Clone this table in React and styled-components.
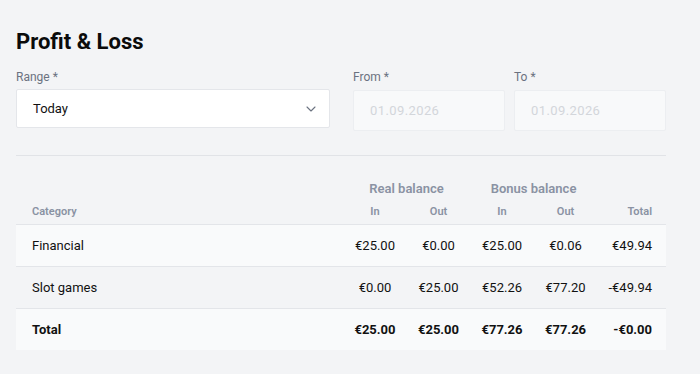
import React from "react";
import styled, { createGlobalStyle } from "styled-components";
import { ChevronDown } from "lucide-react";

const rows = [
  { name: "Financial", realIn: "€25.00", realOut: "€0.00", bonusIn: "€25.00", bonusOut: "€0.06", total: "€49.94" },
  { name: "Slot games", realIn: "€0.00", realOut: "€25.00", bonusIn: "€52.26", bonusOut: "€77.20", total: "-€49.94" },
];

const totals = { realIn: "€25.00", realOut: "€25.00", bonusIn: "€77.26", bonusOut: "€77.26", total: "-€0.00" };

const App = () => {
  return (
    <>
      <GlobalStyle />
      <Page>
        <Title>Profit &amp; Loss</Title>
        <Filters>
          <Field $width="314px">
            <Label>Range *</Label>
            <Select>
              <span>Today</span>
              <ChevronDown size={16} strokeWidth={1.6} color="#6b7280" />
            </Select>
          </Field>
          <Dates>
            <Field $width="152px">
              <Label>From *</Label>
              <DateInput>01.09.2026</DateInput>
            </Field>
            <Field $width="152px">
              <Label>To *</Label>
              <DateInput>01.09.2026</DateInput>
            </Field>
          </Dates>
        </Filters>
        <Divider />
        <Table>
          <colgroup>
            <col style={{ width: "327px" }} />
            <col style={{ width: "64px" }} />
            <col style={{ width: "63px" }} />
            <col style={{ width: "64px" }} />
            <col style={{ width: "63px" }} />
            <col style={{ width: "69px" }} />
          </colgroup>
          <thead>
            <GroupRow>
              <th />
              <GroupHead colSpan={2}>Real balance</GroupHead>
              <GroupHead colSpan={2}>Bonus balance</GroupHead>
              <th />
            </GroupRow>
            <HeadRow>
              <HeadCell $align="left">Category</HeadCell>
              <HeadCell>In</HeadCell>
              <HeadCell>Out</HeadCell>
              <HeadCell>In</HeadCell>
              <HeadCell>Out</HeadCell>
              <HeadCell $align="right">Total</HeadCell>
            </HeadRow>
          </thead>
          <tbody>
            {rows.map((r, i) => (
              <BodyRow key={r.name} $shade={i % 2 === 1}>
                <Cell $align="left">{r.name}</Cell>
                <Cell>{r.realIn}</Cell>
                <Cell>{r.realOut}</Cell>
                <Cell>{r.bonusIn}</Cell>
                <Cell>{r.bonusOut}</Cell>
                <Cell $align="right">{r.total}</Cell>
              </BodyRow>
            ))}
            <BodyRow $total>
              <Cell $align="left">Total</Cell>
              <Cell>{totals.realIn}</Cell>
              <Cell>{totals.realOut}</Cell>
              <Cell>{totals.bonusIn}</Cell>
              <Cell>{totals.bonusOut}</Cell>
              <Cell $align="right">{totals.total}</Cell>
            </BodyRow>
          </tbody>
        </Table>
      </Page>
    </>
  );
};

const GlobalStyle = createGlobalStyle`
  body {
    margin: 0;
    background: #f3f4f6;
    font-family: Roboto, "Liberation Sans", sans-serif;
    color: #111;
  }
`;

const Page = styled.div`
  width: 650px;
  padding: 28px 16px 24px;
`;

const Title = styled.h1`
  margin: 0;
  font-size: 22px;
  line-height: 28px;
  font-weight: 700;
  color: #0b0b0b;
`;

const Filters = styled.div`
  margin-top: 13px;
  display: flex;
  justify-content: space-between;
`;

const Dates = styled.div`
  display: flex;
  gap: 9px;
`;

const Field = styled.div`
  width: ${(p) => p.$width};
  display: flex;
  flex-direction: column;
`;

const Label = styled.label`
  font-size: 12px;
  line-height: 16px;
  color: #6b7280;
  margin-bottom: 4px;
`;

const Select = styled.div`
  box-sizing: border-box;
  height: 39px;
  display: flex;
  align-items: center;
  justify-content: space-between;
  padding: 0 10px 0 16px;
  background: #fff;
  border: 1px solid #e4e6ea;
  border-radius: 2px;
  font-size: 13px;
  color: #111;
`;

const DateInput = styled.div`
  box-sizing: border-box;
  height: 41px;
  margin-top: 1px;
  display: flex;
  align-items: center;
  padding: 0 16px;
  background: #f8f9fa;
  border: 1px solid #eceef1;
  border-radius: 2px;
  font-size: 13px;
  letter-spacing: 0.4px;
  color: #d3d6db;
`;

const Divider = styled.hr`
  margin: 24px 0 20px;
  border: 0;
  border-top: 1px solid #e1e3e7;
`;

const Table = styled.table`
  width: 650px;
  table-layout: fixed;
  border-collapse: collapse;
  font-size: 13px;
`;

const GroupRow = styled.tr`
  height: 24px;
`;

const GroupHead = styled.th`
  text-align: center;
  font-size: 13px;
  font-weight: 600;
  color: #8a92a3;
  padding: 0;
`;

const HeadRow = styled.tr`
  height: 24px;
  border-bottom: 1px solid #e3e5e9;
`;

const HeadCell = styled.th`
  text-align: ${(p) => p.$align || "center"};
  font-size: 11px;
  font-weight: 600;
  color: #8a92a3;
  padding: ${(p) => (p.$align === "left" ? "0 0 0 16px" : p.$align === "right" ? "0 14px 0 0" : "0")};
`;

const BodyRow = styled.tr`
  height: 42px;
  background: ${(p) => (p.$shade ? "#f3f4f6" : "#f9fafb")};
  border-bottom: ${(p) => (p.$total ? "none" : "1px solid #e3e5e9")};
  font-weight: ${(p) => (p.$total ? 700 : 400)};
`;

const Cell = styled.td`
  text-align: ${(p) => p.$align || "center"};
  padding: ${(p) => (p.$align === "left" ? "0 0 0 16px" : p.$align === "right" ? "0 14px 0 0" : "0")};
  color: #111;
  white-space: nowrap;
`;

export default App;
